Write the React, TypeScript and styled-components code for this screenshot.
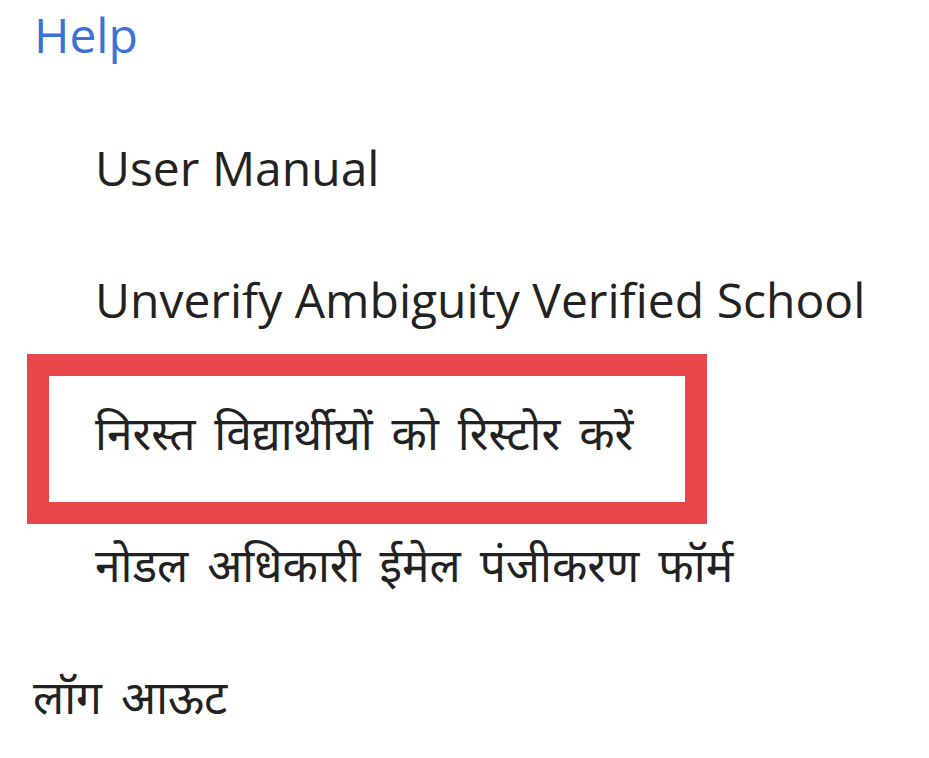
import React from "react";
import styled, { createGlobalStyle } from "styled-components";

const GlobalStyle = createGlobalStyle`
  html, body {
    margin: 0;
    padding: 0;
    background: #ffffff;
  }
  body {
    font-family: "Open Sans", "Noto Sans", "Noto Sans Devanagari", "Lohit Devanagari", sans-serif;
    color: #222222;
  }
`;

const Menu = styled.nav`
  width: 929px;
  height: 758px;
  padding-top: 2px;
  box-sizing: border-box;
  overflow: hidden;
  display: flex;
  flex-direction: column;
`;

const Heading = styled.div`
  font-size: 48px;
  line-height: 66px;
  height: 100px;
  flex-shrink: 0;
  padding-left: 34px;
  color: #3b72d5;
`;

const Item = styled.div<{ $indent: number }>`
  position: relative;
  flex-shrink: 0;
  font-size: 48px;
  line-height: 132px;
  height: 132px;
  padding-left: ${(p) => p.$indent}px;
  white-space: nowrap;
`;

const Hindi = styled.span`
  font-family: "Noto Sans Devanagari", "Lohit Devanagari", "Noto Sans", sans-serif;
  font-size: 46px;
  word-spacing: 7px;
`;

const Highlight = styled.div`
  position: absolute;
  left: 27px;
  top: -12px;
  width: 680px;
  height: 170px;
  box-sizing: border-box;
  border: 22px solid #e8464b;
  pointer-events: none;
`;

export default function App() {
  return (
    <>
      <GlobalStyle />
      <Menu>
        <Heading>Help</Heading>
        <Item $indent={95}>User Manual</Item>
        <Item $indent={95}>Unverify Ambiguity Verified School</Item>
        <Item $indent={95}>
          <Hindi>निरस्त विद्यार्थीयों को रिस्टोर करें</Hindi>
          <Highlight />
        </Item>
        <Item $indent={95}>
          <Hindi>नोडल अधिकारी ईमेल पंजीकरण फॉर्म</Hindi>
        </Item>
        <Item $indent={33}>
          <Hindi>लॉग आऊट</Hindi>
        </Item>
      </Menu>
    </>
  );
}
